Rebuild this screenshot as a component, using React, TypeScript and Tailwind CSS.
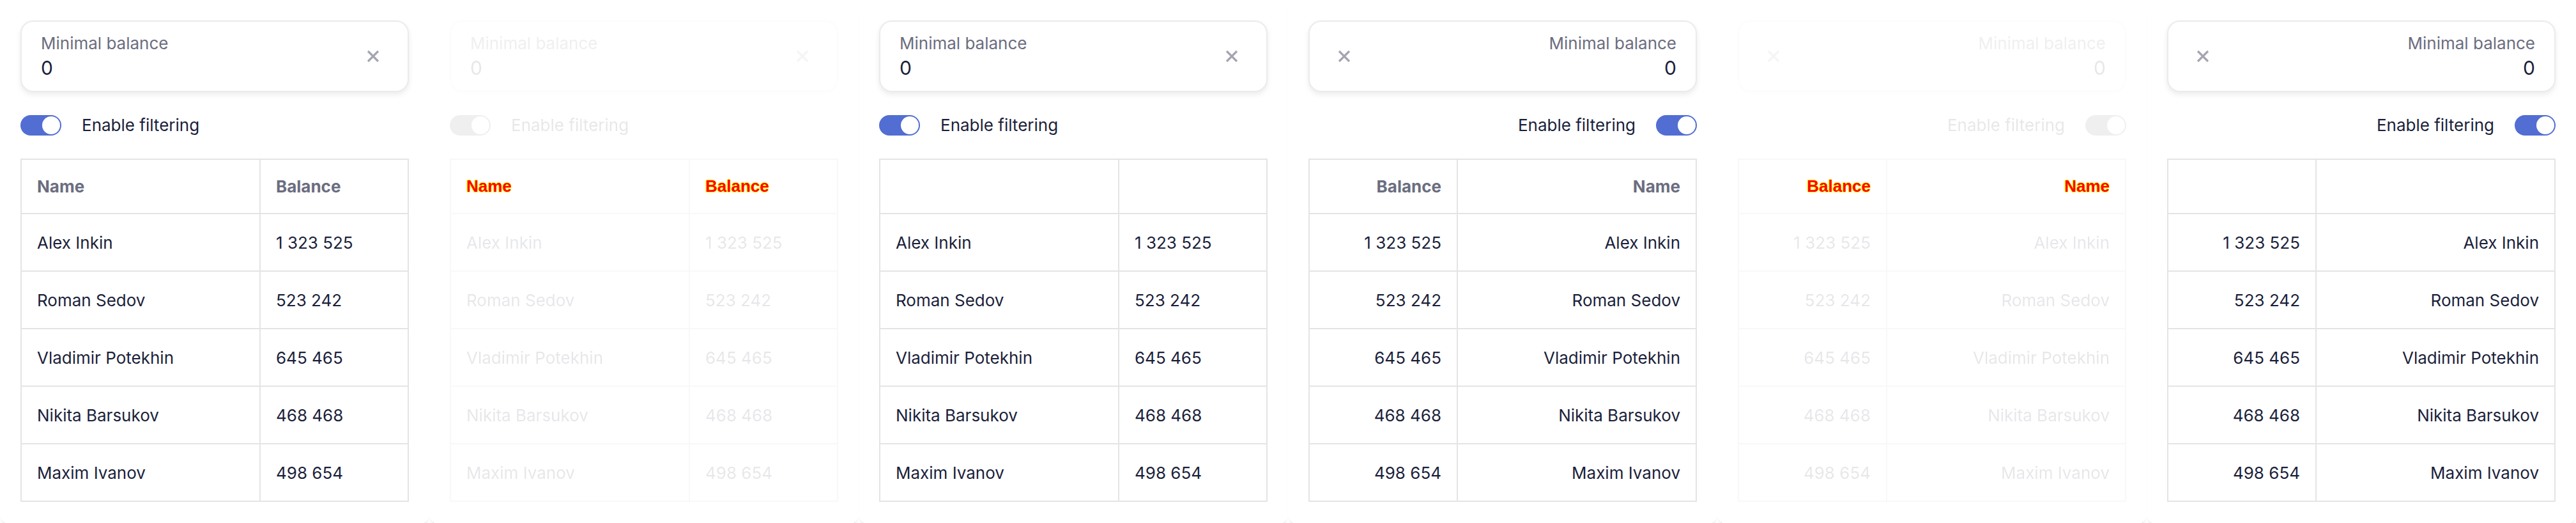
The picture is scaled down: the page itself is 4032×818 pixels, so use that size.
import { Fragment } from 'react';

type HeaderMode = 'normal' | 'red' | 'none';

interface PanelProps {
  rtl?: boolean;
  faded?: boolean;
  headers: HeaderMode;
}

const ROWS = [
  ['Alex Inkin', '1\u00A0323\u00A0525'],
  ['Roman Sedov', '523\u00A0242'],
  ['Vladimir Potekhin', '645\u00A0465'],
  ['Nikita Barsukov', '468\u00A0468'],
  ['Maxim Ivanov', '498\u00A0654'],
];

const PANELS: PanelProps[] = [
  { headers: 'normal' },
  { faded: true, headers: 'red' },
  { headers: 'none' },
  { rtl: true, headers: 'normal' },
  { rtl: true, faded: true, headers: 'red' },
  { rtl: true, headers: 'none' },
];

function ClearIcon() {
  return (
    <svg width="20" height="20" viewBox="0 0 20 20" className="shrink-0">
      <path d="M2 2 L18 18 M18 2 L2 18" stroke="#a4a5b1" strokeWidth="3.2" fill="none" />
    </svg>
  );
}

function Toggle() {
  return (
    <div dir="ltr" className="flex h-[32px] w-[64px] shrink-0 items-center justify-end rounded-full bg-[#526ed3] pr-[2px]">
      <div className="h-[28px] w-[28px] rounded-full bg-white" />
    </div>
  );
}

function HeaderCell({ label, mode }: { label: string; mode: HeaderMode }) {
  return (
    <div className="flex h-[85px] items-center border-r-2 border-b-2 border-inherit px-[24px]">
      {mode === 'normal' && (
        <span className="text-[26px] font-bold text-[#6b6d80]">{label}</span>
      )}
      {mode === 'red' && (
        <span className="font-['Liberation_Sans',Arial,sans-serif] text-[26px] font-bold text-[#ff0000] [text-shadow:1px_0_#ffff00,-1px_0_#ffff00,0_1px_#ffff00,0_-1px_#ffff00]">
          {label}
        </span>
      )}
    </div>
  );
}

function Panel({ rtl, faded, headers }: PanelProps) {
  const fade = faded ? 'opacity-10 grayscale' : '';
  return (
    <div
      dir={rtl ? 'rtl' : 'ltr'}
      className="h-[820px] w-[672px] shrink-0 rounded-b-[16px] bg-white px-[32px] pt-[32px] shadow-[0_8px_6px_-6px_rgba(0,0,0,0.25)]"
    >
      {/* Text field with clear button */}
      <div className={fade}>
        <div className="flex h-[112px] w-[608px] items-center rounded-[20px] border-2 border-[#ebebeb] bg-white px-[30px] shadow-[0_4px_8px_rgba(0,0,0,0.08)]">
          <div className="flex flex-1 flex-col">
            <span className="text-[26px] leading-[32px] text-[#6b6d80]">Minimal balance</span>
            <span className="mt-[4px] text-[30px] leading-[36px] text-[#1b1f3b]">0</span>
          </div>
          <div className="mx-[14px]">
            <ClearIcon />
          </div>
        </div>
      </div>

      {/* Toggle */}
      <div className={`mt-[36px] flex items-center gap-[32px] ${fade}`}>
        <Toggle />
        <span className="text-[26px] leading-[32px] text-[#1b1f3b]">Enable filtering</span>
      </div>

      {/* Table */}
      <div
        className={`mt-[36px] grid w-[608px] grid-cols-[374px_232px] border-l-2 border-t-2 ${
          faded ? 'border-[#f8f8f8]' : 'border-[#e4e4e4]'
        }`}
      >
        <HeaderCell label="Name" mode={headers} />
        <HeaderCell label="Balance" mode={headers} />
        {ROWS.map(([name, balance]) => (
          <Fragment key={name}>
            <div className="flex h-[90px] items-center border-r-2 border-b-2 border-inherit px-[24px]">
              <span className={`text-[26px] text-[#1b1f3b] ${faded ? 'opacity-10' : ''}`}>{name}</span>
            </div>
            <div className="flex h-[90px] items-center border-r-2 border-b-2 border-inherit px-[24px]">
              <span className={`text-[26px] text-[#1b1f3b] ${faded ? 'opacity-10' : ''}`}>{balance}</span>
            </div>
          </Fragment>
        ))}
      </div>
    </div>
  );
}

export default function App() {
  return (
    <div className="flex h-[818px] w-[4032px] overflow-hidden bg-white font-[Inter,'Noto_Sans',sans-serif]">
      {PANELS.map((p, i) => (
        <Panel key={i} {...p} />
      ))}
    </div>
  );
}
